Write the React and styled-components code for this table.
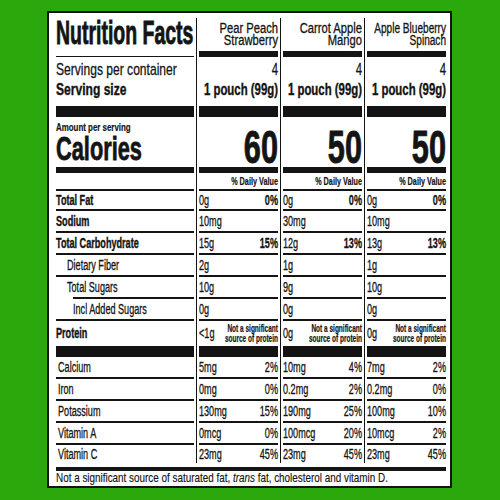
import React from 'react';
import styled, { createGlobalStyle } from 'styled-components';

const INK = '#141414';
const GREEN = '#2ba80c';
const K = 0.65;

const products = [
  {
    name: ['Pear Peach', 'Strawberry'],
    nameK: 0.8,
    servings: '4',
    size: '1 pouch (99g)',
    cal: 60,
    fat: ['0g', '0%'],
    sodium: ['10mg'],
    carb: ['15g', '15%'],
    fiber: ['2g'],
    sugars: ['10g'],
    added: ['0g'],
    protein: '<1g',
    calcium: ['5mg', '2%'],
    iron: ['0mg', '0%'],
    potassium: ['130mg', '15%'],
    vitA: ['0mcg', '0%'],
    vitC: ['23mg', '45%'],
  },
  {
    name: ['Carrot Apple', 'Mango'],
    nameK: 0.8,
    servings: '4',
    size: '1 pouch (99g)',
    cal: 50,
    fat: ['0g', '0%'],
    sodium: ['30mg'],
    carb: ['12g', '13%'],
    fiber: ['1g'],
    sugars: ['9g'],
    added: ['0g'],
    protein: '0g',
    calcium: ['10mg', '4%'],
    iron: ['0.2mg', '2%'],
    potassium: ['190mg', '25%'],
    vitA: ['100mcg', '20%'],
    vitC: ['23mg', '45%'],
  },
  {
    name: ['Apple Blueberry', 'Spinach'],
    nameK: 0.72,
    servings: '4',
    size: '1 pouch (99g)',
    cal: 50,
    fat: ['0g', '0%'],
    sodium: ['10mg'],
    carb: ['13g', '13%'],
    fiber: ['1g'],
    sugars: ['10g'],
    added: ['0g'],
    protein: '0g',
    calcium: ['7mg', '2%'],
    iron: ['0.2mg', '0%'],
    potassium: ['100mg', '10%'],
    vitA: ['10mcg', '2%'],
    vitC: ['23mg', '45%'],
  },
];

const nutrients = [
  { key: 'fat', label: 'Total Fat', bold: true, h: 20 },
  { key: 'sodium', label: 'Sodium', bold: true },
  { key: 'carb', label: 'Total Carbohydrate', bold: true },
  { key: 'fiber', label: 'Dietary Fiber', indent: 11 },
  { key: 'sugars', label: 'Total Sugars', indent: 11, rule: 17 },
  { key: 'added', label: 'Incl Added Sugars', indent: 17 },
];

const minerals = [
  { key: 'calcium', label: 'Calcium' },
  { key: 'iron', label: 'Iron' },
  { key: 'potassium', label: 'Potassium' },
  { key: 'vitA', label: 'Vitamin A' },
  { key: 'vitC', label: 'Vitamin C', last: true },
];

const GlobalStyle = createGlobalStyle`
  html, body {
    margin: 0;
    padding: 0;
    background: ${GREEN};
  }
  body {
    font-family: "Liberation Sans", Arial, sans-serif;
    color: ${INK};
  }
`;

const Page = styled.div`
  width: 500px;
  height: 500px;
  box-sizing: border-box;
  padding: 11px 0 0 47px;
  background: ${GREEN};
`;

const Panel = styled.div`
  width: 405px;
  height: 477px;
  box-sizing: border-box;
  background: #fff;
  border: 2px solid ${INK};
  padding: 5px 4px 0 7px;
  display: flex;
  flex-direction: column;
`;

const Table = styled.div`
  display: flex;
  flex-direction: column;
`;

const Row = styled.div`
  display: grid;
  grid-template-columns: 138px repeat(3, minmax(0, 1fr));
  height: ${({ $h }) => $h}px;
`;

const Cell = styled.div`
  display: flex;
  flex-direction: column;
  min-width: 0;
`;

const Slot = styled(Cell)`
  margin-left: 2px;
  padding-left: 2px;
  border-left: 1px solid ${INK};
`;

const Body = styled.div`
  flex: 1;
  min-height: 0;
  display: flex;
  flex-direction: column;
  justify-content: ${({ $top }) => ($top ? 'flex-start' : 'center')};
  padding-top: ${({ $pt = 0 }) => $pt}px;
  padding-left: ${({ $pl = 0 }) => $pl}px;
`;

const Rule = styled.div`
  flex-shrink: 0;
  height: ${({ $h = 2 }) => $h}px;
  margin-left: ${({ $ml = 0 }) => $ml}px;
  background: ${INK};
`;

const Bar = styled.div`
  flex: ${({ $h }) => ($h ? '0 0 auto' : 1)};
  height: ${({ $h }) => ($h ? `${$h}px` : 'auto')};
  margin-top: ${({ $mt = 0 }) => $mt}px;
  background: ${INK};
`;

// condensed text: laid out wide, then squeezed back into its cell
const Txt = styled.div`
  flex-shrink: 0;
  width: ${({ $k = K }) => 100 / $k}%;
  transform: scaleX(${({ $k = K }) => $k});
  transform-origin: 0 50%;
  font-size: ${({ $fs = 14 }) => $fs}px;
  line-height: ${({ $lh }) => ($lh ? `${$lh}px` : 1.15)};
  font-weight: ${({ $b }) => ($b ? 700 : 400)};
  text-align: ${({ $r }) => ($r ? 'right' : 'left')};
  white-space: nowrap;
  margin-top: ${({ $mt = 0 }) => $mt}px;
  -webkit-text-stroke: ${({ $heavy, $b }) => $heavy ?? ($b ? 0.4 : 0.3)}px ${INK};
`;

const Split = styled(Txt)`
  display: flex;
  justify-content: space-between;
  align-items: center;
`;

const Pct = styled.span`
  font-weight: ${({ $b }) => ($b ? 700 : 400)};
`;

const Note = styled.span`
  font-size: 10px;
  line-height: 9.5px;
  font-weight: 700;
  text-align: right;
  -webkit-text-stroke: 0.2px ${INK};
`;

const Foot = styled.div`
  padding-top: 0;
`;

const BarRow = ({ h }) => (
  <Row $h={h}>
    <Cell>
      <Bar />
    </Cell>
    {products.map((p, i) => (
      <Slot key={i}>
        <Bar />
      </Slot>
    ))}
  </Row>
);

const NutrientRow = ({ n, h, bold, pctBold, rule = true }) => (
  <Row $h={h}>
    <Cell>
      <Body $pl={n.indent}>
        <Txt $b={bold}>{n.label}</Txt>
      </Body>
      {rule && <Rule $ml={n.rule} />}
    </Cell>
    {products.map((p, i) => (
      <Slot key={i}>
        <Body>
          <Split>
            <span>{p[n.key][0]}</span>
            {p[n.key][1] && <Pct $b={pctBold}>{p[n.key][1]}</Pct>}
          </Split>
        </Body>
        {rule && <Rule />}
      </Slot>
    ))}
  </Row>
);

export default function App() {
  return (
    <Page>
      <GlobalStyle />
      <Panel>
        <Table>
          <Row $h={39}>
            <Cell>
              <Body $top $pt={1}>
                <Txt $k={0.59} $fs={33} $lh={28} $b $heavy={0.9}>
                  Nutrition Facts
                </Txt>
              </Body>
              <Rule $h={1} />
            </Cell>
            {products.map((p, i) => (
              <Slot key={i}>
                <Body $top $pt={3.5}>
                  <Txt $k={p.nameK} $fs={14} $lh={12.5} $r>
                    {p.name[0]}
                    <br />
                    {p.name[1]}
                  </Txt>
                </Body>
                <Bar $h={6} />
              </Slot>
            ))}
          </Row>

          <Row $h={49}>
            <Cell>
              <Body $top $pt={3}>
                <Txt $k={0.71} $fs={17} $lh={20}>Servings per container</Txt>
                <Txt $k={0.71} $fs={17} $lh={20} $b>Serving size</Txt>
              </Body>
            </Cell>
            {products.map((p, i) => (
              <Slot key={i}>
                <Body $top $pt={3}>
                  <Txt $k={0.67} $fs={17} $lh={20} $r>{p.servings}</Txt>
                  <Txt $k={0.67} $fs={17} $lh={20} $r $b>{p.size}</Txt>
                </Body>
              </Slot>
            ))}
          </Row>

          <BarRow h={11} />

          <Row $h={50}>
            <Cell>
              <Body $top $pt={4}>
                <Txt $k={0.74} $fs={10.7} $lh={12} $b $heavy={0.2}>Amount per serving</Txt>
                <Txt $k={0.66} $fs={33} $lh={30} $mt={1} $b $heavy={0.8}>
                  Calories
                </Txt>
              </Body>
            </Cell>
            {products.map((p, i) => (
              <Slot key={i}>
                <Body $top $pt={10}>
                  <Txt $k={0.66} $fs={46.5} $lh={40} $r $b $heavy={0.9}>
                    {p.cal}
                  </Txt>
                </Body>
              </Slot>
            ))}
          </Row>

          <BarRow h={6} />

          <Row $h={18}>
            <Cell>
              <Body />
              <Rule />
            </Cell>
            {products.map((p, i) => (
              <Slot key={i}>
                <Body $top $pt={2}>
                  <Txt $k={0.68} $fs={10.7} $lh={12} $r $b $heavy={0.2}>% Daily Value</Txt>
                </Body>
                <Rule />
              </Slot>
            ))}
          </Row>

          {nutrients.map((n) => (
            <NutrientRow key={n.key} n={n} h={n.h || 22} bold={n.bold} pctBold />
          ))}

          <Row $h={25}>
            <Cell>
              <Body>
                <Txt $b>Protein</Txt>
              </Body>
            </Cell>
            {products.map((p, i) => (
              <Slot key={i}>
                <Body>
                  <Split>
                    <span>{p.protein}</span>
                    <Note>
                      Not a significant
                      <br />
                      source of protein
                    </Note>
                  </Split>
                </Body>
              </Slot>
            ))}
          </Row>

          <BarRow h={11} />

          {minerals.map((m) => (
            <NutrientRow
              key={m.key}
              n={{ ...m, indent: 2 }}
              h={m.last ? 18 : 22}
              rule={!m.last}
            />
          ))}
        </Table>

        <Bar $h={4} $mt={4} />

        <Foot>
          <Txt $k={0.785} $fs={12.6} $lh={15} $heavy={0.15}>
            Not a significant source of saturated fat, <i>trans</i> fat, cholesterol and vitamin D.
          </Txt>
        </Foot>
      </Panel>
    </Page>
  );
}
